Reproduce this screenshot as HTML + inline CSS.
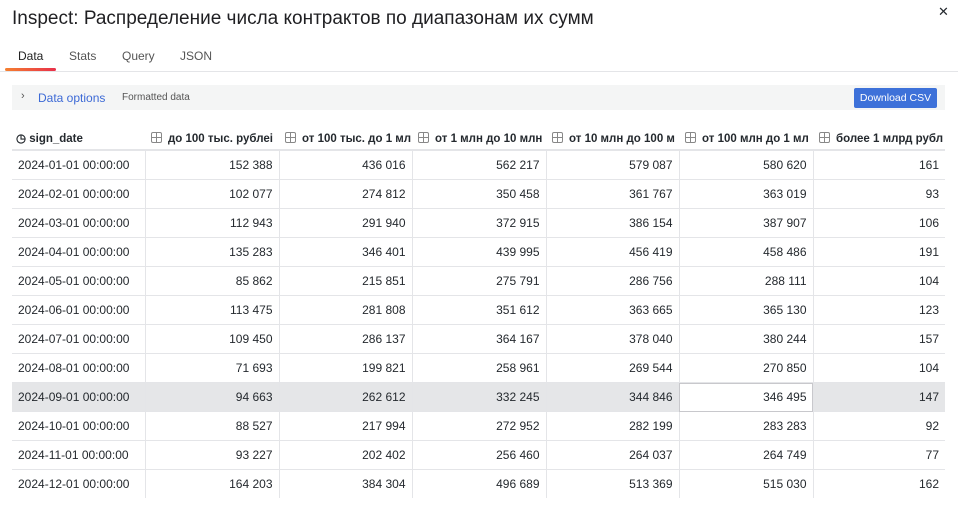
<!DOCTYPE html><html><head><style>
body{margin:0;width:958px;height:528px;background:#fff;font-family:"Liberation Sans",sans-serif;color:#24292e;overflow:hidden;position:relative}
.t{position:absolute;left:12px;top:8px;font-size:19px;color:#1f1f22}
.x{position:absolute;left:938px;top:4px;font-size:13px}
.tabs{position:absolute;left:0;top:46px;width:958px;height:25px;border-bottom:1px solid #e4e5e8}
.tab{position:absolute;top:3px;font-size:12px;color:#555}
.ul{position:absolute;left:5px;top:22px;width:51px;height:3px;background:linear-gradient(90deg,#f58030,#e8304a);border-radius:2px}
.opt{position:absolute;left:12px;top:85px;width:933px;height:25px;background:#f4f5f5}
.btn{position:absolute;left:854px;top:88px;width:83px;height:20px;background:#3d71d9;color:#fff;font-size:10.5px;line-height:20px;text-align:center;border-radius:2px}
table{position:absolute;left:12px;top:127px;width:933px;border-collapse:collapse;font-size:12px;table-layout:fixed}
td,th{height:28px;padding:0 6px;white-space:nowrap;overflow:hidden;border-left:1px solid #e4e5e8;border-bottom:1px solid #e4e5e8}
th{height:22px;text-align:left;font-weight:bold;font-size:11.5px;border-bottom:2px solid #e4e5e8;border-left:none;padding-left:6px;text-overflow:clip}
th:first-child{padding-left:4px}
td:first-child{border-left:none;text-align:left}
td{text-align:right}
tr.h td{background:#e5e6e8}
td.w{background:#fff!important;outline:1px solid #c8c8cc;outline-offset:-1px}
.g{display:inline-block;width:9px;height:9px;border:1px solid #888;border-radius:2px;margin-right:6px;vertical-align:-1px;background:linear-gradient(#888,#888) 4px 0/1px 9px no-repeat,linear-gradient(#888,#888) 0 4px/9px 1px no-repeat}
</style></head><body>
<div class="t">Inspect: Распределение числа контрактов по диапазонам их сумм</div>
<div class="x">✕</div>
<div class="tabs"><span class="tab" style="left:18px;color:#222">Data</span><span class="tab" style="left:69px">Stats</span><span class="tab" style="left:122px">Query</span><span class="tab" style="left:180px">JSON</span><div class="ul"></div></div>
<div class="opt"><span style="position:absolute;left:9px;top:5px;font-size:11px;color:#555">›</span><span style="position:absolute;left:26px;top:6px;font-size:12px;color:#3d6ad6">Data options</span><span style="position:absolute;left:110px;top:7px;font-size:10px;color:#555">Formatted data</span></div>
<div class="btn">Download CSV</div>
<table>
<colgroup><col style="width:133px"><col style="width:134px"><col style="width:133px"><col style="width:134px"><col style="width:133px"><col style="width:134px"><col style="width:132px"></colgroup>
<tr><th>◷ sign_date</th><th><span class="g"></span>до 100 тыс. рублеі</th><th><span class="g"></span>от 100 тыс. до 1 мл</th><th><span class="g"></span>от 1 млн до 10 млн</th><th><span class="g"></span>от 10 млн до 100 м</th><th><span class="g"></span>от 100 млн до 1 мл</th><th><span class="g"></span>более 1 млрд рубл</th></tr>
<tr><td>2024-01-01 00:00:00</td><td>152 388</td><td>436 016</td><td>562 217</td><td>579 087</td><td>580 620</td><td>161</td></tr>
<tr><td>2024-02-01 00:00:00</td><td>102 077</td><td>274 812</td><td>350 458</td><td>361 767</td><td>363 019</td><td>93</td></tr>
<tr><td>2024-03-01 00:00:00</td><td>112 943</td><td>291 940</td><td>372 915</td><td>386 154</td><td>387 907</td><td>106</td></tr>
<tr><td>2024-04-01 00:00:00</td><td>135 283</td><td>346 401</td><td>439 995</td><td>456 419</td><td>458 486</td><td>191</td></tr>
<tr><td>2024-05-01 00:00:00</td><td>85 862</td><td>215 851</td><td>275 791</td><td>286 756</td><td>288 111</td><td>104</td></tr>
<tr><td>2024-06-01 00:00:00</td><td>113 475</td><td>281 808</td><td>351 612</td><td>363 665</td><td>365 130</td><td>123</td></tr>
<tr><td>2024-07-01 00:00:00</td><td>109 450</td><td>286 137</td><td>364 167</td><td>378 040</td><td>380 244</td><td>157</td></tr>
<tr><td>2024-08-01 00:00:00</td><td>71 693</td><td>199 821</td><td>258 961</td><td>269 544</td><td>270 850</td><td>104</td></tr>
<tr class="h"><td>2024-09-01 00:00:00</td><td>94 663</td><td>262 612</td><td>332 245</td><td>344 846</td><td class="w">346 495</td><td>147</td></tr>
<tr><td>2024-10-01 00:00:00</td><td>88 527</td><td>217 994</td><td>272 952</td><td>282 199</td><td>283 283</td><td>92</td></tr>
<tr><td>2024-11-01 00:00:00</td><td>93 227</td><td>202 402</td><td>256 460</td><td>264 037</td><td>264 749</td><td>77</td></tr>
<tr><td style="border-bottom:none">2024-12-01 00:00:00</td><td style="border-bottom:none">164 203</td><td style="border-bottom:none">384 304</td><td style="border-bottom:none">496 689</td><td style="border-bottom:none">513 369</td><td style="border-bottom:none">515 030</td><td style="border-bottom:none">162</td></tr>
</table>
</body></html>
